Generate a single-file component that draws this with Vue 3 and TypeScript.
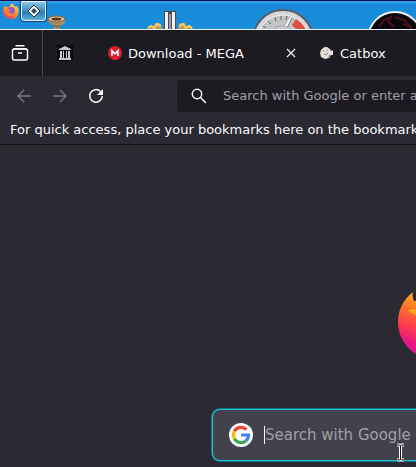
<script setup lang="ts">
import { ref } from 'vue'

interface Tab {
  title: string
  icon: 'mega' | 'catbox'
  closable: boolean
}

const tabs: Tab[] = [
  { title: 'Download - MEGA', icon: 'mega', closable: true },
  { title: 'Catbox', icon: 'catbox', closable: false },
]
const address = ref('')
const query = ref('')
</script>

<template>
  <div class="screen">
    <header class="desktop">
      <div class="taskbar">
        <button class="launcher" aria-label="Firefox">
          <svg width="18" height="18" viewBox="0 0 18 18">
            <defs>
              <linearGradient id="fxSmall" x1="0.8" y1="0" x2="0.2" y2="1">
                <stop offset="0" stop-color="#ffe34b" />
                <stop offset="0.5" stop-color="#ff922f" />
                <stop offset="1" stop-color="#f33262" />
              </linearGradient>
            </defs>
            <path d="M3 3l1 2 3 0 3-4c1 2 3 3 4 4l1-1c2 3 2 6 1 8-1 4-4 5-7 5-5 0-8-4-8-8 0-2 1-4 2-6z" fill="url(#fxSmall)" />
            <circle cx="9" cy="9" r="4" fill="#9059c8" />
            <path d="M3 8c2-2 4-1 6 0l-2 1c0 3 3 3 5 1 0 3-4 5-7 3-1-1-2-3-2-5z" fill="#ff7b3c" />
          </svg>
        </button>
        <button class="launcher active" aria-label="Diamond application">
          <svg width="14" height="14" viewBox="0 0 14 14">
            <path d="M7 1l6 6-6 6-6-6z" fill="#fff" stroke="#28394b" />
            <path d="M7 4l3 3-3 3-3-3z" fill="#334b62" />
          </svg>
        </button>
      </div>
      <svg class="shortcut vase" width="22" height="20" viewBox="0 0 22 20">
        <path d="M2 4c0 5 4 5 6 7l-1 3H4v6h12v-6h-2V11c3-1 6-3 5-7z" fill="#a58c62" />
        <ellipse cx="10.500" cy="4" rx="8.500" ry="3" fill="#dfc194" stroke="#80643f" />
        <ellipse cx="10.500" cy="4" rx="5" ry="1.500" fill="#58361d" />
        <path d="M7 10l4 2 3-1" stroke="#65502f" fill="none" />
      </svg>
      <svg class="shortcut emblem" width="46" height="22" viewBox="0 0 46 22">
        <path d="M0 19l3-4 4 1 1-3 5 0 4 9H1zM46 19l-3-4-4 1-1-3-5 0-4 9h16z" fill="#c49b4c" />
        <path d="M1 18l3-2 3 2 3-4 4 2M45 18l-3-2-3 2-3-4-4 2" stroke="#f3ca70" fill="none" stroke-width="2" />
        <path d="M17 1h12v21H17z" fill="#4b4b54" />
        <path d="M18 2h3v20h-3zM25 2h3v20h-3z" fill="#f0f0f2" />
        <path d="M22 4h2v18h-2z" fill="#9c9ca6" />
      </svg>
      <svg class="shortcut gauge" width="60" height="20" viewBox="0 0 60 20">
        <circle cx="30" cy="31" r="30" fill="#d6d7d7" stroke="#575d62" stroke-width="2" />
        <circle cx="30" cy="31" r="25" fill="#bfc3c4" stroke="#eee" />
        <path d="M43 10a25 25 0 0 1 10 11l-7 2-7-7z" fill="#df4f42" />
        <path d="M10 17l3 2M15 12l3 3M22 8l1 4M28 7v4M34 7l-1 4" stroke="#5c6062" />
        <path d="M38 9L31 21" stroke="#fff" stroke-width="2" />
        <path d="M39 9L33 21" stroke="#777" />
        <circle cx="29" cy="29" r="12" fill="#ccc" stroke="#aaa" />
      </svg>
      <svg class="shortcut disc" width="56" height="19" viewBox="0 0 56 19">
        <circle cx="28" cy="29" r="27" fill="#09080c" stroke="#eee" stroke-width="2" />
        <path d="M12 17l5-7 7-3-3 5 7 5M28 7l9 3 8 8-9-4" stroke="#4d101a" stroke-width="2" fill="none" />
      </svg>
    </header>

    <nav class="tabbar" aria-label="Tabs">
      <button class="view" aria-label="Firefox View">
        <svg width="18" height="18" viewBox="0 0 18 18" fill="none" stroke="#fbfbfe" stroke-width="1.500" stroke-linecap="round">
          <path d="M5 1.800h8M3 4.800h12" />
          <rect x="1.500" y="5" width="15" height="11" rx="2" />
          <path d="M7.500 9h3" />
        </svg>
      </button>
      <button class="pinned" aria-label="Internet Archive">
        <svg width="16" height="16" viewBox="0 0 16 16">
          <rect width="16" height="16" fill="#0a0a0c" />
          <path d="M8 1l6 3v1H2V4zM3 6h2v7H3zM6 6h1v7H6zM9 6h1v7H9zM11 6h2v7h-2zM2 13h12v2H2z" fill="#c9c9cc" />
        </svg>
      </button>
      <div v-for="tab in tabs" :key="tab.title" class="tab" :class="tab.icon">
        <svg v-if="tab.icon === 'mega'" width="14" height="14" viewBox="0 0 14 14">
          <circle cx="7" cy="7" r="7" fill="#dc1d2b" />
          <path d="M4 10V4.800l3 3 3-3V10" fill="none" stroke="#fff" stroke-width="1.600" />
        </svg>
        <svg v-else width="14" height="14" viewBox="0 0 14 14">
          <path d="M1 4l2-2 2-1 2 0 3 2 1 2 2-1v5l-2 0-2 3-4 1-4-2-1-4z" fill="#e8dfda" />
          <path d="M3 5h1M7 4h1M4 8l2 1 2-2M8 11l2-2" stroke="#8e7c75" fill="none" />
        </svg>
        <button class="title">{{ tab.title }}</button>
        <button v-if="tab.closable" class="close" aria-label="Close tab">
          <svg width="10" height="10" viewBox="0 0 10 10"><path d="M1 1l8 8M9 1L1 9" stroke="#f0f0f4" stroke-width="1.200" /></svg>
        </button>
      </div>
    </nav>

    <div class="toolbar">
      <button class="tool" aria-label="Back" disabled>
        <svg width="16" height="16" viewBox="0 0 16 16"><path d="M15 8H2M8 2L2 8l6 6" /></svg>
      </button>
      <button class="tool" aria-label="Forward" disabled>
        <svg width="16" height="16" viewBox="0 0 16 16"><path d="M1 8h13M8 2l6 6-6 6" /></svg>
      </button>
      <button class="tool" aria-label="Reload">
        <svg width="16" height="16" viewBox="0 0 16 16"><path d="M12.500 3.500A6.300 6.300 0 1 0 14.300 8" /><path class="tip" d="M15 1v6H9z" /></svg>
      </button>
      <label class="address">
        <svg width="16" height="16" viewBox="0 0 16 16"><circle cx="6" cy="6" r="4.700" /><path d="M9.500 9.500L15 15" /></svg>
        <input v-model="address" type="text" aria-label="Address" placeholder="Search with Google or enter address" />
      </label>
    </div>

    <p class="bookmarks">For quick access, place your bookmarks here on the bookmarks toolbar.</p>

    <main class="newtab">
      <svg class="logo" width="80" height="80" viewBox="0 0 80 80">
        <defs>
          <linearGradient id="fxLarge" x1="0.600" y1="0" x2="0.300" y2="1">
            <stop offset="0.100" stop-color="#ffbd2f" />
            <stop offset="0.350" stop-color="#ff8126" />
            <stop offset="0.600" stop-color="#ff4048" />
            <stop offset="0.850" stop-color="#e6148a" />
          </linearGradient>
        </defs>
        <path d="M15 6c-1 4 0 6 1 9 4-1 8 0 12 2C38 6 48 3 52 0c2 12 26 18 26 40 0 20-17 34-38 34C18 74 0 58 0 36 0 23 6 13 15 6z" fill="url(#fxLarge)" />
        <path d="M10 25c3-3 8-2 12 1l12 1c0 4-5 6-10 6-4-3-8-5-14-8z" fill="#ffa51f" />
      </svg>
      <label class="search">
        <svg class="google" width="24" height="24" viewBox="0 0 24 24">
          <circle cx="12" cy="12" r="12" fill="#fff" />
          <g fill="none" stroke-width="3.200">
            <path d="M5.400 8.200A7.600 7.600 0 0 1 17.400 6.600" stroke="#ea4335" />
            <path d="M5.400 15.800a7.600 7.600 0 0 1 0-7.600" stroke="#fbbc05" />
            <path d="M17 17.700A7.600 7.600 0 0 1 5.400 15.800" stroke="#34a853" />
            <path d="M12 12h7.600a7.600 7.600 0 0 1-2.600 5.700" stroke="#4285f4" />
          </g>
        </svg>
        <span class="caret"></span>
        <input v-model="query" type="text" aria-label="Search the web" placeholder="Search with Google or enter address" />
      </label>
      <svg class="pointer" width="9" height="19" viewBox="0 0 9 19">
        <path d="M1 2h2.500l1 1 1-1H8M4.500 3v13M1 17h2.500l1-1 1 1H8" fill="none" stroke="#fff" stroke-width="3" />
        <path d="M1 2h2.500l1 1 1-1H8M4.500 3v13M1 17h2.500l1-1 1 1H8" fill="none" stroke="#111" />
      </svg>
    </main>
  </div>
</template>

<style>
body {
  margin: 0;
  background: #2b2a33;
}
</style>

<style scoped>
.screen {
  display: flex;
  flex-direction: column;
  min-height: 100vh;
  overflow: hidden;
  color: #fbfbfe;
  background: #2b2a33;
  font-family: "DejaVu Sans", sans-serif;
  font-size: 13px;
}
button {
  display: flex;
  align-items: center;
  justify-content: center;
  padding: 0;
  border: 0;
  background: none;
  color: inherit;
  font: inherit;
}
svg {
  display: block;
  flex: none;
}
.desktop {
  position: relative;
  height: 28px;
  overflow: hidden;
  border-top: 1px solid #080b46;
  border-bottom: 1px solid #eef6fb;
  background: linear-gradient(#39a4ea, #168bd9 4px, #198edb);
}
.taskbar {
  display: flex;
}
.launcher {
  width: 21px;
  height: 20px;
}
.launcher.active {
  box-sizing: border-box;
  width: 25px;
  border: 1px solid #dff4ff;
  border-radius: 0 0 3px 3px;
  background: linear-gradient(#8bc8e9, #287eaf 60%, #62b3d5);
  box-shadow: 0 0 0 1px #164472;
}
.shortcut {
  position: absolute;
}
.vase {
  top: 14px;
  left: 46px;
}
.emblem {
  top: 9px;
  left: 147px;
}
.gauge {
  top: 8px;
  left: 253px;
}
.disc {
  top: 9px;
  left: 367px;
}
.tabbar {
  display: flex;
  align-items: center;
  height: 46px;
  background: #1c1b22;
}
.view {
  box-sizing: border-box;
  flex: none;
  width: 43px;
  height: 46px;
  padding-right: 2px;
  border-right: 1px solid #4b4a52;
}
.pinned {
  flex: none;
  width: 44px;
  height: 36px;
}
.tab {
  box-sizing: border-box;
  display: flex;
  flex: none;
  align-items: center;
  gap: 6px;
  width: 232px;
  padding-left: 21px;
}
.tab.catbox {
  padding-left: 1px;
}
.title {
  white-space: nowrap;
}
.close {
  width: 16px;
  height: 16px;
  margin-left: auto;
  margin-right: 20px;
}
.toolbar {
  display: flex;
  align-items: center;
  height: 39px;
  padding-left: 6px;
}
.tool {
  flex: none;
  width: 36px;
  height: 32px;
}
.tool svg,
.address svg {
  fill: none;
  stroke: #fbfbfe;
  stroke-width: 1.5;
}
.tool:disabled svg {
  stroke: #76757d;
}
.tool .tip {
  fill: #fbfbfe;
  stroke: none;
}
.address {
  display: flex;
  flex: 1;
  align-items: center;
  gap: 16px;
  min-width: 0;
  height: 32px;
  margin-left: 63px;
  padding-left: 14px;
  border-radius: 4px 0 0 4px;
  background: #1c1b22;
}
input {
  flex: 1;
  min-width: 0;
  padding: 0;
  border: 0;
  outline: 0;
  background: none;
  color: #fbfbfe;
  font: inherit;
}
input::placeholder {
  color: #a1a0a7;
  opacity: 1;
}
.bookmarks {
  height: 29px;
  margin: 0;
  padding-left: 10px;
  border-bottom: 1px solid #0c0c0d;
  line-height: 30px;
  white-space: nowrap;
}
.newtab {
  position: relative;
  flex: 1;
  padding: 141px 0 4px 212px;
}
.logo {
  margin-left: 186px;
}
.search {
  display: flex;
  align-items: center;
  height: 50px;
  margin-top: 43px;
  padding-left: 16px;
  border: 1px solid #20c5cd;
  border-right: 0;
  border-radius: 8px 0 0 8px;
  background: #42414d;
  box-shadow: 0 0 0 1px #14727f;
  font-size: 15px;
}
.caret {
  width: 1px;
  height: 18px;
  margin-left: 11px;
  background: #fbfbfe;
}
.pointer {
  position: absolute;
  top: 298px;
  left: 396px;
}
</style>
